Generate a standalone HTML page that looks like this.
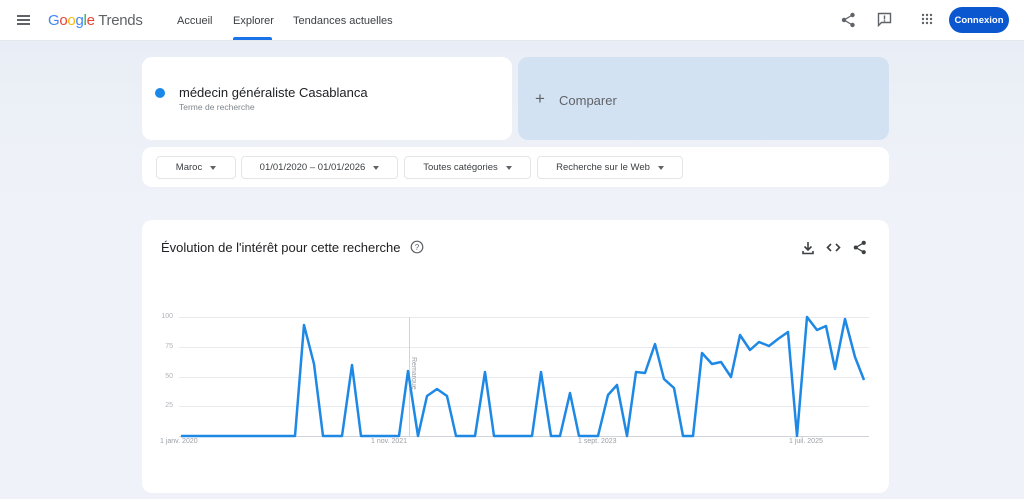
<!DOCTYPE html>
<html><head><meta charset="utf-8"><style>
*{margin:0;padding:0;box-sizing:border-box}
body{width:1024px;height:499px;overflow:hidden;background:#eff2f8;font-family:"Liberation Sans",sans-serif;position:relative;color:#202124}
.hdr{position:absolute;left:0;top:0;width:1024px;height:41px;background:#fff;border-bottom:1px solid #e3e6ea}
.abs{position:absolute}
.nav{font-size:11px;color:#3c4043;top:15px}
.card{position:absolute;background:#fff;border-radius:10px}
.dd{position:absolute;top:156px;height:23px;border:1px solid #e3e5e8;border-radius:4px;font-size:9.5px;color:#3c4043;display:flex;align-items:center;justify-content:center;gap:8px;background:#fff}
.dd:after{content:"";border-left:3.5px solid transparent;border-right:3.5px solid transparent;border-top:4px solid #5f6368}
.yl{position:absolute;font-size:7px;color:#b0b3b8;right:851px}
.xl{position:absolute;font-size:7px;color:#9aa0a6;top:438px}
</style></head><body>
<div class="abs" style="left:0;top:41px;width:1024px;height:160px;background:linear-gradient(#e9eef6,#eff2f8)"></div>
<div class="hdr">
 <div class="abs" style="left:17px;top:15px;width:13px;height:2px;background:#5f6368;box-shadow:0 4px 0 #5f6368,0 8px 0 #5f6368"></div>
 <div class="abs" style="left:48px;top:12px;font-size:15px;letter-spacing:-0.3px"><span style="color:#4285f4">G</span><span style="color:#ea4335">o</span><span style="color:#fbbc05">o</span><span style="color:#4285f4">g</span><span style="color:#34a853">l</span><span style="color:#ea4335">e</span> <span style="color:#5f6368">Trends</span></div>
 <div class="abs nav" style="left:177px">Accueil</div>
 <div class="abs nav" style="left:233px">Explorer</div>
 <div class="abs" style="left:233px;top:37px;width:39px;height:3px;background:#1a73e8;border-radius:2px 2px 0 0"></div>
 <div class="abs nav" style="left:293px">Tendances actuelles</div>
 <svg class="abs" style="left:841px;top:12px" width="15" height="16" viewBox="0 0 15 16"><g fill="#5f6368"><circle cx="11.5" cy="3" r="2.2"/><circle cx="3" cy="8" r="2.2"/><circle cx="11.5" cy="13" r="2.2"/></g><path d="M11.5 3L3 8l8.5 5" stroke="#5f6368" stroke-width="1.3" fill="none"/></svg>
 <svg class="abs" style="left:877px;top:12px" width="15" height="15" viewBox="0 0 15 15"><path d="M1.5 1.5h12v9h-9l-3 3z" fill="none" stroke="#5f6368" stroke-width="1.4"/><rect x="6.8" y="3.5" width="1.4" height="4" fill="#5f6368"/><rect x="6.8" y="8.2" width="1.4" height="1.3" fill="#5f6368"/></svg>
 <svg class="abs" style="left:921px;top:13px" width="12" height="12" viewBox="0 0 12 12"><g fill="#5f6368"><circle cx="2" cy="2" r="1.2"/><circle cx="6" cy="2" r="1.2"/><circle cx="10" cy="2" r="1.2"/><circle cx="2" cy="6" r="1.2"/><circle cx="6" cy="6" r="1.2"/><circle cx="10" cy="6" r="1.2"/><circle cx="2" cy="10" r="1.2"/><circle cx="6" cy="10" r="1.2"/><circle cx="10" cy="10" r="1.2"/></g></svg>
 <div class="abs" style="left:949px;top:7px;width:60px;height:26px;border-radius:13px;background:#0b57d0;color:#fff;font-size:9.5px;font-weight:bold;display:flex;align-items:center;justify-content:center">Connexion</div>
</div>
<div class="card" style="left:142px;top:57px;width:370px;height:83px"></div>
<div class="abs" style="left:155px;top:88px;width:10px;height:10px;border-radius:50%;background:#1a88e8"></div>
<div class="abs" style="left:179px;top:85px;font-size:13px;color:#202124">médecin généraliste Casablanca</div>
<div class="abs" style="left:179px;top:102px;font-size:8.5px;color:#80868b">Terme de recherche</div>
<div class="card" style="left:518px;top:57px;width:371px;height:83px;background:#d3e2f3"></div>
<div class="abs" style="left:535px;top:89px;font-size:17px;color:#5f6368">+</div>
<div class="abs" style="left:559px;top:93px;font-size:13px;color:#5f6368">Comparer</div>
<div class="card" style="left:142px;top:147px;width:747px;height:40px"></div>
<div class="dd" style="left:156px;width:80px">Maroc</div>
<div class="dd" style="left:241px;width:157px">01/01/2020 – 01/01/2026</div>
<div class="dd" style="left:404px;width:127px">Toutes catégories</div>
<div class="dd" style="left:537px;width:146px">Recherche sur le Web</div>
<div class="card" style="left:142px;top:220px;width:747px;height:273px"></div>
<div class="abs" style="left:161px;top:240px;font-size:13px;color:#202124">Évolution de l'intérêt pour cette recherche</div>
<svg class="abs" style="left:410px;top:240px" width="14" height="14" viewBox="0 0 14 14"><circle cx="7" cy="7" r="5.8" fill="none" stroke="#5f6368" stroke-width="1.2"/><text x="7" y="10" font-size="8" text-anchor="middle" fill="#5f6368" font-family="Liberation Sans">?</text></svg>
<svg class="abs" style="left:801px;top:241px" width="14" height="14" viewBox="0 0 14 14"><path d="M7 1v8M3.5 5.5L7 9l3.5-3.5M2 10v2.5h10V10" fill="none" stroke="#3c4043" stroke-width="1.6"/></svg>
<svg class="abs" style="left:826px;top:241px" width="15" height="13" viewBox="0 0 15 13"><path d="M5 3L1.5 6.5 5 10M10 3l3.5 3.5L10 10" fill="none" stroke="#3c4043" stroke-width="1.6"/></svg>
<svg class="abs" style="left:853px;top:240px" width="14" height="15" viewBox="0 0 15 16"><g fill="#3c4043"><circle cx="11.5" cy="3" r="2.2"/><circle cx="3" cy="8" r="2.2"/><circle cx="11.5" cy="13" r="2.2"/></g><path d="M11.5 3L3 8l8.5 5" stroke="#3c4043" stroke-width="1.3" fill="none"/></svg>
<svg class="abs" style="left:0;top:0" width="1024" height="499">
<g stroke="#e8eaed" stroke-width="1"><line x1="179" y1="317.5" x2="869" y2="317.5"/><line x1="179" y1="347.5" x2="869" y2="347.5"/><line x1="179" y1="377.5" x2="869" y2="377.5"/><line x1="179" y1="406.5" x2="869" y2="406.5"/></g>
<line x1="179" y1="436.5" x2="869" y2="436.5" stroke="#d0d3d7"/>
<line x1="409.5" y1="317" x2="409.5" y2="436" stroke="#d0d3d7"/>
<text transform="translate(412,357) rotate(90)" font-size="7" fill="#9aa0a6" font-family="Liberation Sans">Remarque</text>
<polyline fill="none" stroke="#1e88e5" stroke-width="2.5" stroke-linejoin="round" points="181,436 295,436 304,325 314,364 323,436 342,436 352,365 361,436 399,436 408,371 418,436 427,396 437,389 447,396 456,436 475,436 485,372 494,436 532,436 541,372 551,436 560,436 570,393 579,436 598,436 608,395 617,385 627,436 636,372 645,373 655,344 664,379 674,388 683,436 693,436 702,353 712,364 721,362 731,377 740,335 750,350 759,342 769,346 778,339 788,332 797,436 807,317 817,330 826,326 835,369 845,319 855,357 864,380"/>
</svg>
<div class="yl" style="top:313px">100</div>
<div class="yl" style="top:343px">75</div>
<div class="yl" style="top:373px">50</div>
<div class="yl" style="top:402px">25</div>
<div class="xl" style="left:160px">1 janv. 2020</div>
<div class="xl" style="left:371px">1 nov. 2021</div>
<div class="xl" style="left:578px">1 sept. 2023</div>
<div class="xl" style="left:789px">1 juil. 2025</div>
</body></html>
